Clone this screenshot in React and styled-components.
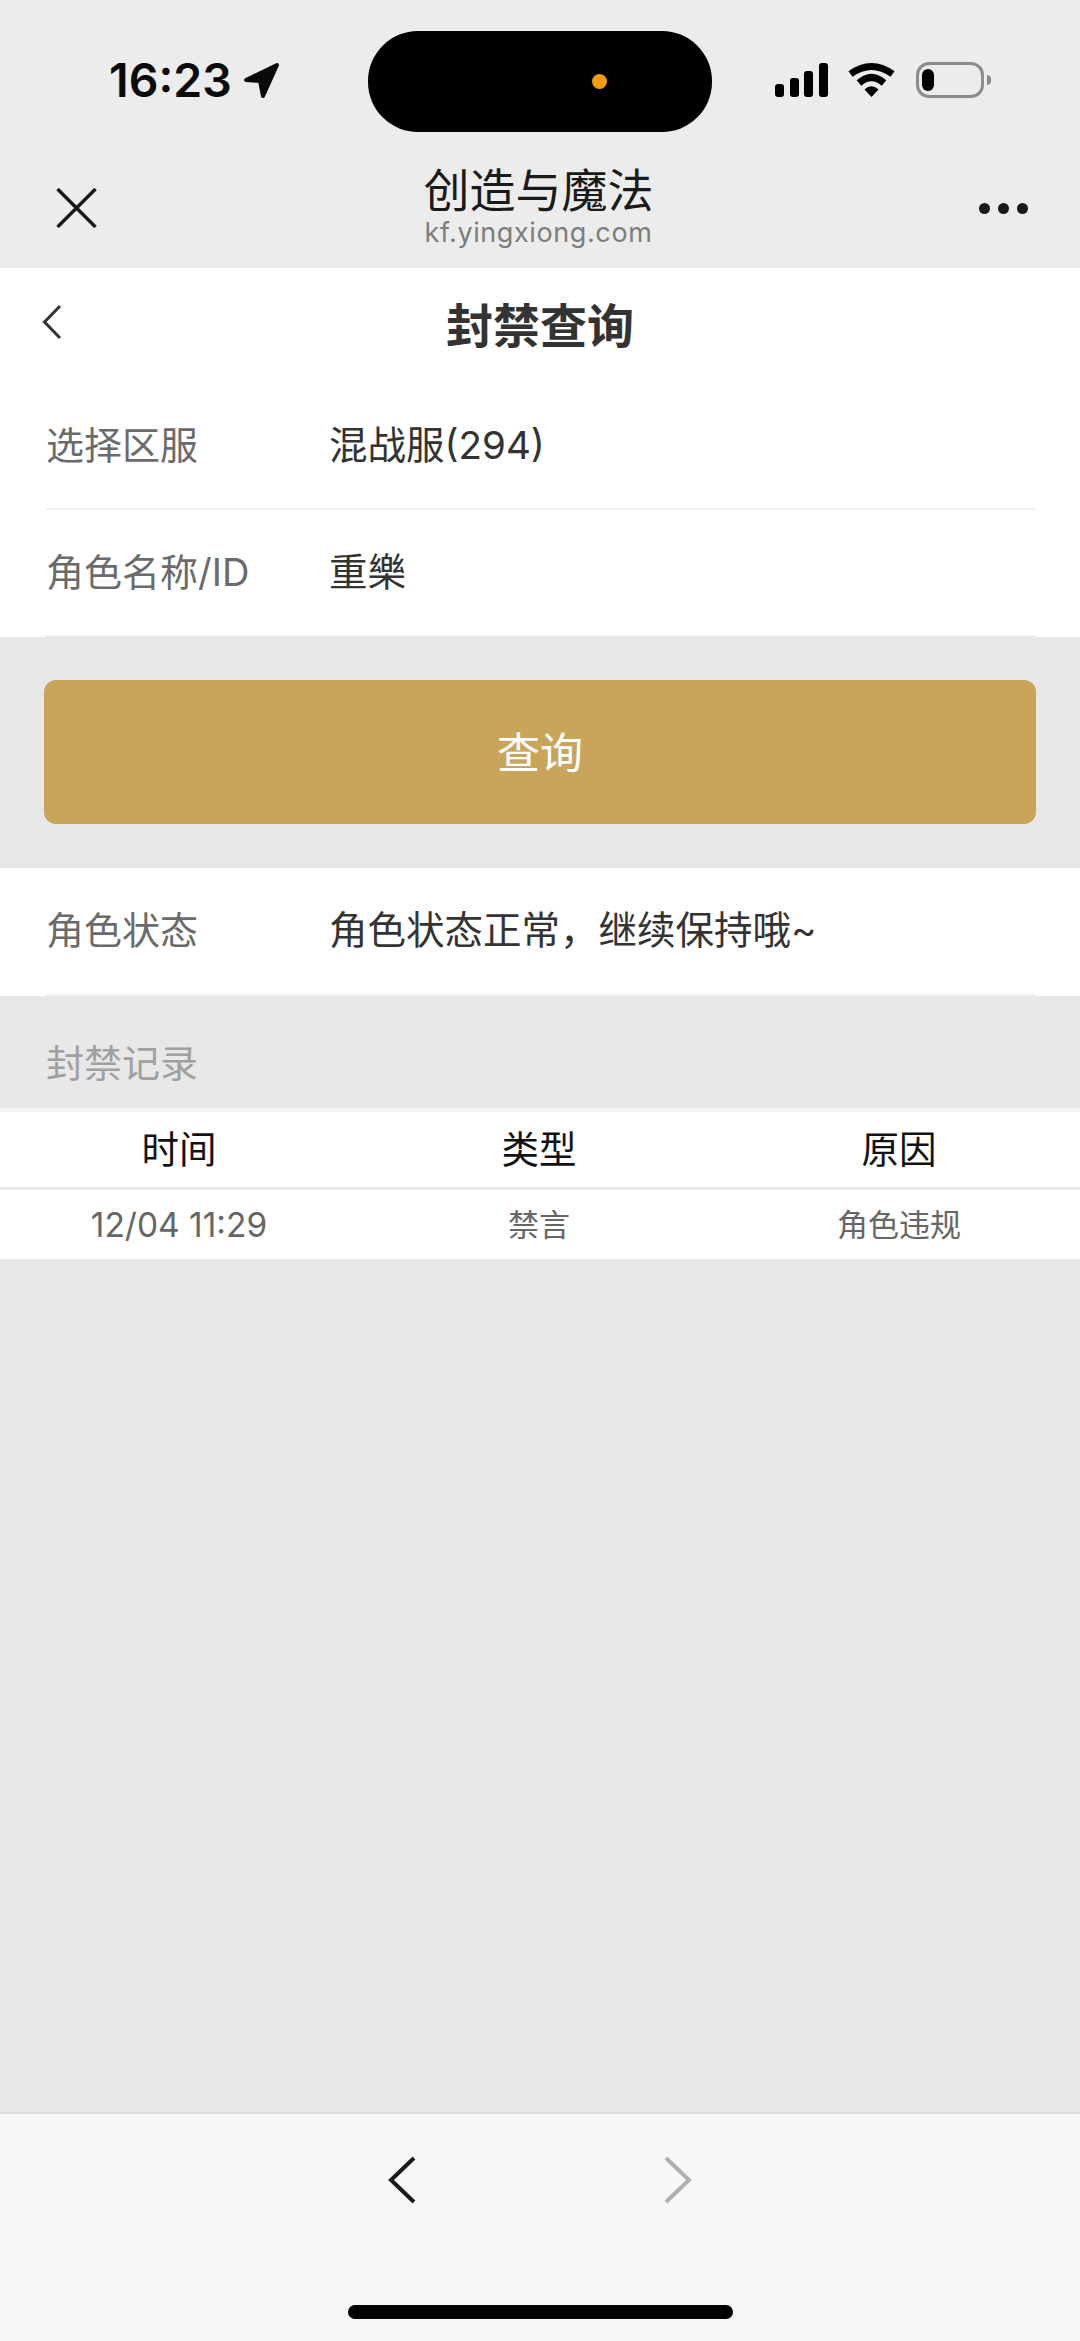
import React from "react";
import styled, { createGlobalStyle } from "styled-components";

const FONT = `Inter, "Noto Sans CJK SC", "Noto Sans", sans-serif`;

const GlobalStyle = createGlobalStyle`
  html, body {
    margin: 0;
    padding: 0;
    background: #e8e8e8;
  }
  * {
    box-sizing: border-box;
  }
`;

const Phone = styled.div`
  display: flex;
  flex-direction: column;
  width: 1080px;
  height: 2341px;
  overflow: hidden;
  background: #e8e8e8;
  font-family: ${FONT};
`;

const TopChrome = styled.header`
  flex: none;
  background: #ececec;
`;

const StatusBar = styled.div`
  display: grid;
  grid-template-columns: 368px 344px 1fr;
  height: 150px;
`;

const StatusLeft = styled.div`
  display: flex;
  align-items: center;
  gap: 11px;
  height: 36px;
  margin-top: 62px;
  padding-left: 109px;
`;

const Clock = styled.span`
  font-size: 46.5px;
  font-weight: 600;
  line-height: 36px;
  color: #0a0a0a;
`;

const Island = styled.div`
  display: flex;
  align-items: center;
  justify-content: flex-end;
  height: 101px;
  margin-top: 31px;
  padding-right: 105px;
  border-radius: 50px;
  background: #000;
`;

const CameraDot = styled.span`
  width: 15px;
  height: 15px;
  border-radius: 50%;
  background: #f39c12;
`;

const StatusRight = styled.div`
  display: flex;
  align-items: center;
  gap: 20px;
  height: 36px;
  margin-top: 62px;
  padding-left: 63px;
`;

const Signal = styled.div`
  display: flex;
  align-items: flex-end;
  gap: 5.5px;
  height: 34px;
`;

const SignalBar = styled.span`
  width: 9px;
  height: ${(p) => p.$h}px;
  border-radius: 3px;
  background: #000;
`;

const Battery = styled.div`
  position: relative;
  width: 68px;
  height: 36px;
  margin-left: 1px;
  padding: 4px 3px;
  border: 3px solid #8c8c8c;
  border-radius: 13px;

  &::after {
    content: "";
    position: absolute;
    top: 10px;
    right: -10px;
    width: 4px;
    height: 10px;
    border-radius: 0 4px 4px 0;
    background: #8c8c8c;
  }
`;

const BatteryLevel = styled.span`
  display: block;
  width: 12px;
  height: 100%;
  border-radius: 6px;
  background: #000;
`;

const NavBar = styled.div`
  display: grid;
  grid-template-columns: 1fr auto 1fr;
  align-items: center;
  height: 118px;
  padding: 0 52px 0 56px;
`;

const NavTitles = styled.div`
  display: flex;
  flex-direction: column;
  align-items: center;
  margin: -4px 7px 0 0;
`;

const SiteName = styled.div`
  font-size: 46px;
  font-weight: 400;
  line-height: 52px;
  color: #1a1a1a;
`;

const SiteHost = styled.div`
  font-size: 27px;
  line-height: 34px;
  letter-spacing: 0.6px;
  color: #7d7d7d;
`;

const NavSide = styled.div`
  display: flex;
  justify-content: ${(p) => (p.$end ? "flex-end" : "flex-start")};
  padding-bottom: 2px;
`;

const MoreDots = styled.div`
  display: flex;
  gap: 8px;
`;

const MoreDot = styled.span`
  width: 11px;
  height: 11px;
  border-radius: 50%;
  background: #1a1a1a;
`;

const Card = styled.section`
  flex: none;
  background: #fff;
`;

const PageHead = styled.div`
  display: grid;
  grid-template-columns: 1fr auto 1fr;
  align-items: center;
  height: 115px;
  padding: 0 42px;
`;

const PageTitle = styled.h1`
  margin: 1px 0 0;
  font-size: 47px;
  font-weight: 700;
  line-height: 60px;
  color: #333;
`;

const BackLink = styled.div`
  display: flex;
  margin-top: -7px;
`;

const FieldRow = styled.div`
  display: flex;
  align-items: center;
  height: ${(p) => p.$h || 127}px;
  margin: 0 44px 0 46px;
  padding-bottom: 2px;
  border-bottom: 2px solid #f0f0f0;
`;

const FieldLabel = styled.span`
  flex: none;
  width: 284px;
  font-size: 38px;
  line-height: 50px;
  color: #6b6b6b;
`;

const FieldValue = styled.span`
  margin-left: -1px;
  font-size: 38.5px;
  line-height: 50px;
  color: #333;
`;

const ButtonArea = styled.div`
  flex: none;
  padding: 43px 44px 44px;
`;

const QueryButton = styled.button`
  display: block;
  width: 100%;
  height: 144px;
  padding: 0 0 5px;
  border: 0;
  border-radius: 12px;
  background: #c9a55c;
  font-family: inherit;
  font-size: 43px;
  color: #fff;
`;

const SectionTitle = styled.div`
  flex: none;
  height: 112px;
  padding: 42px 46px 0;
  font-size: 38px;
  line-height: 50px;
  color: #a0a0a0;
`;

const RecordTable = styled.div`
  flex: none;
  background: #fff;
`;

const TableRow = styled.div`
  display: grid;
  grid-template-columns: repeat(3, 1fr);
  align-items: center;
  height: ${(p) => p.$h}px;
  ${(p) => p.$head && "border-top: 4px solid #f4f4f4; border-bottom: 3px solid #e8e8e8;"}
`;

const HeadCell = styled.div`
  padding-right: 2px;
  text-align: center;
  font-size: 37.5px;
  line-height: 48px;
  color: #111;
`;

const BodyCell = styled.div`
  padding-right: 2px;
  text-align: center;
  font-size: ${(p) => p.$size || 31}px;
  line-height: 44px;
  color: #666;
`;

const Spacer = styled.div`
  flex: 1;
`;

const BottomBar = styled.footer`
  flex: none;
  position: relative;
  height: 229px;
  padding-top: 42px;
  border-top: 2px solid #dcdcdc;
  background: #f7f7f7;
`;

const BottomNav = styled.div`
  display: flex;
  justify-content: center;
  gap: 248px;
`;

const HomeBar = styled.div`
  position: absolute;
  left: 348px;
  bottom: 22px;
  width: 385px;
  height: 14px;
  border-radius: 7px;
  background: #000;
`;

const LocationArrow = () => (
  <svg width="37" height="37" viewBox="0 0 37 37">
    <path d="M3 18 L34 3 L20 34 L17 19 Z" fill="#0a0a0a" stroke="#0a0a0a" strokeWidth="4" strokeLinejoin="round" />
  </svg>
);

const WifiIcon = () => (
  <svg width="47" height="36" viewBox="0 0 47 36">
    <path d="M2.5 12 Q23.5 -3 44.5 12" fill="none" stroke="#000" strokeWidth="7" />
    <path d="M11 21 Q23.5 10 36 21" fill="none" stroke="#000" strokeWidth="7" />
    <path d="M16.5 27.5 Q23.5 21 30.5 27.5 L23.5 35 Z" fill="#000" />
  </svg>
);

const CloseIcon = () => (
  <svg width="41" height="40" viewBox="0 0 41 40">
    <path d="M1.5 1 L39.5 39 M39.5 1 L1.5 39" stroke="#1a1a1a" strokeWidth="3.5" fill="none" />
  </svg>
);

const ThinBack = () => (
  <svg width="20" height="36" viewBox="0 0 20 36">
    <path d="M18 2 L2.5 18 L18 34" stroke="#333" strokeWidth="3" fill="none" />
  </svg>
);

const Chevron = ({ right, color }) => (
  <svg width="28" height="48" viewBox="0 0 28 48">
    <path
      d={right ? "M2 2 L25 24 L2 46" : "M26 2 L3 24 L26 46"}
      stroke={color}
      strokeWidth="4"
      fill="none"
    />
  </svg>
);

export default function App() {
  return (
    <Phone>
      <GlobalStyle />
      <TopChrome>
        <StatusBar>
          <StatusLeft>
            <Clock>16:23</Clock>
            <LocationArrow />
          </StatusLeft>
          <Island>
            <CameraDot />
          </Island>
          <StatusRight>
            <Signal>
              {[13, 19, 26, 34].map((h) => (
                <SignalBar key={h} $h={h} />
              ))}
            </Signal>
            <WifiIcon />
            <Battery>
              <BatteryLevel />
            </Battery>
          </StatusRight>
        </StatusBar>
        <NavBar>
          <NavSide>
            <CloseIcon />
          </NavSide>
          <NavTitles>
            <SiteName>创造与魔法</SiteName>
            <SiteHost>kf.yingxiong.com</SiteHost>
          </NavTitles>
          <NavSide $end>
            <MoreDots>
              <MoreDot />
              <MoreDot />
              <MoreDot />
            </MoreDots>
          </NavSide>
        </NavBar>
      </TopChrome>

      <Card>
        <PageHead>
          <BackLink>
            <ThinBack />
          </BackLink>
          <PageTitle>封禁查询</PageTitle>
        </PageHead>
        <FieldRow>
          <FieldLabel>选择区服</FieldLabel>
          <FieldValue>混战服(294)</FieldValue>
        </FieldRow>
        <FieldRow>
          <FieldLabel>角色名称/ID</FieldLabel>
          <FieldValue>重樂</FieldValue>
        </FieldRow>
      </Card>

      <ButtonArea>
        <QueryButton>查询</QueryButton>
      </ButtonArea>

      <Card>
        <FieldRow $h={128}>
          <FieldLabel>角色状态</FieldLabel>
          <FieldValue>角色状态正常，继续保持哦~</FieldValue>
        </FieldRow>
      </Card>

      <SectionTitle>封禁记录</SectionTitle>

      <RecordTable>
        <TableRow $head $h={82}>
          <HeadCell>时间</HeadCell>
          <HeadCell>类型</HeadCell>
          <HeadCell>原因</HeadCell>
        </TableRow>
        <TableRow $h={69}>
          <BodyCell $size={33.5}>12/04 11:29</BodyCell>
          <BodyCell>禁言</BodyCell>
          <BodyCell>角色违规</BodyCell>
        </TableRow>
      </RecordTable>

      <Spacer />

      <BottomBar>
        <BottomNav>
          <Chevron color="#1a1a1a" />
          <Chevron right color="#b0b0b0" />
        </BottomNav>
        <HomeBar />
      </BottomBar>
    </Phone>
  );
}
